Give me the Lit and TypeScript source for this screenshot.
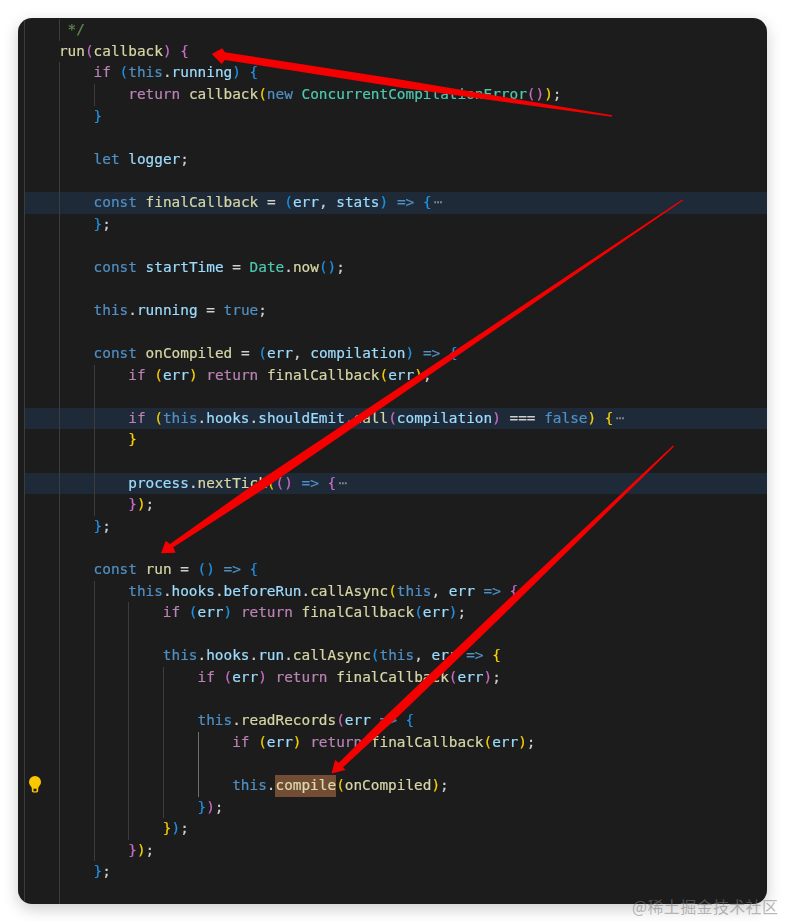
import { LitElement, html, css } from "lit";
import { customElement } from "lit/decorators.js";

interface Line {
  g: number;
  src: string;
  fold?: boolean;
  short?: boolean;
  bright?: boolean;
  bulb?: boolean;
}

const L = (g: number, src = "", extra: Partial<Line> = {}): Line => ({ g, src, ...extra });

const LINES: Line[] = [
  L(2, "[t:*/]", { short: true }),
  L(1, "[f:run][o:(][f:callback][o:)] [o:{]"),
  L(2, "[p:if] [u:(][b:this].[v:running][u:)] [u:{]"),
  L(3, "[p:return] [f:callback][y:(][b:new] [c:ConcurrentCompilationError][o:()][y:)];"),
  L(2, "[u:}]"),
  L(2),
  L(2, "[b:let] [v:logger];"),
  L(2),
  L(2, "[b:const] [f:finalCallback] = [u:(][v:err], [v:stats][u:)] [b:=>] [u:{][e:⋯]", { fold: true }),
  L(2, "[u:}];"),
  L(2),
  L(2, "[b:const] [v:startTime] = [c:Date].[f:now][u:()];"),
  L(2),
  L(2, "[b:this].[v:running] = [b:true];"),
  L(2),
  L(2, "[b:const] [f:onCompiled] = [u:(][v:err], [v:compilation][u:)] [b:=>] [u:{]"),
  L(3, "[p:if] [y:(][v:err][y:)] [p:return] [f:finalCallback][y:(][v:err][y:)];"),
  L(3),
  L(3, "[p:if] [y:(][b:this].[v:hooks].[v:shouldEmit].[f:call][o:(][v:compilation][o:)] === [b:false][y:)] [y:{][e:⋯]", { fold: true }),
  L(3, "[y:}]"),
  L(3),
  L(3, "[v:process].[f:nextTick][y:(][o:()] [b:=>] [o:{][e:⋯]", { fold: true }),
  L(3, "[o:}][y:)];"),
  L(2, "[u:}];"),
  L(2),
  L(2, "[b:const] [f:run] = [u:()] [b:=>] [u:{]"),
  L(3, "[b:this].[v:hooks].[v:beforeRun].[f:callAsync][y:(][b:this], [v:err] [b:=>] [o:{]"),
  L(4, "[p:if] [u:(][v:err][u:)] [p:return] [f:finalCallback][u:(][v:err][u:)];"),
  L(4),
  L(4, "[b:this].[v:hooks].[v:run].[f:callAsync][u:(][b:this], [v:err] [b:=>] [y:{]"),
  L(5, "[p:if] [o:(][v:err][o:)] [p:return] [f:finalCallback][o:(][v:err][o:)];"),
  L(5),
  L(5, "[b:this].[f:readRecords][o:(][v:err] [b:=>] [u:{]"),
  L(6, "[p:if] [y:(][v:err][y:)] [p:return] [f:finalCallback][y:(][v:err][y:)];", { bright: true }),
  L(6, "", { bright: true }),
  L(6, "[b:this].[h:compile][y:(][f:onCompiled][y:)];", { bright: true, bulb: true }),
  L(5, "[u:}][o:)];"),
  L(4, "[y:}][u:)];"),
  L(3, "[o:}][y:)];"),
  L(2, "[u:}];"),
  L(2),
];

const parse = (src: string) => {
  const out: unknown[] = [];
  const re = /\[(\w):([^\]]*)\]/g;
  let last = 0;
  let m: RegExpExecArray | null;
  while ((m = re.exec(src))) {
    if (m.index > last) out.push(src.slice(last, m.index));
    out.push(html`<span class="tk-${m[1]}">${m[2]}</span>`);
    last = m.index + m[0].length;
  }
  if (last < src.length) out.push(src.slice(last));
  return out;
};

@customElement("app-root")
export class AppRoot extends LitElement {
  static styles = css`
    :host {
      display: block;
      position: relative;
      box-sizing: border-box;
      height: 922px;
      padding: 18px;
      overflow: hidden;
      background: #fff;
    }
    .window {
      box-sizing: border-box;
      height: 886px;
      padding: 1.2px 0 0 6.3px;
      overflow: hidden;
      border-radius: 14px;
      background: #1c1c1c;
      box-shadow: 0 5px 16px rgba(0, 0, 0, 0.2);
      font: 14.4px/21.6px "DejaVu Sans Mono", "Liberation Mono", monospace;
      color: #d0d0d0;
    }
    .line {
      position: relative;
      display: flex;
      height: 21.6px;
      white-space: pre;
    }
    .line.fold {
      background: #1f2a38;
    }
    .guide {
      flex: none;
      box-sizing: border-box;
      width: 4ch;
      border-left: 1px solid #3c3c3c;
    }
    .guide.short {
      width: 1ch;
    }
    .guide.bright {
      border-left-color: #6e6e6e;
    }
    .code {
      flex: none;
      filter: blur(0.3px);
      -webkit-text-stroke: 0.2px currentColor;
    }
    .bulb {
      position: absolute;
      left: 4.4px;
      top: 1px;
      width: 12px;
      height: 17px;
    }
    .tk-p { color: #bb82b6; }
    .tk-b { color: #4f90c6; }
    .tk-f { color: #d6d6a6; }
    .tk-v { color: #9cdcfe; }
    .tk-c { color: #4ec9b0; }
    .tk-u { color: #1e93e6; }
    .tk-y { color: #f7d000; }
    .tk-o { color: #c86cc4; }
    .tk-t { color: #5f8a4c; }
    .tk-e {
      margin-left: 2.5px;
      color: #7f8a94;
      -webkit-text-stroke: 0;
    }
    .tk-h {
      display: inline-block;
      background: #734c35;
      color: #dcdcaa;
    }
    .arrows {
      position: absolute;
      left: 0;
      top: 0;
      width: 785px;
      height: 922px;
    }
    .arrows polygon {
      fill: #f40000;
    }
    .mark {
      position: absolute;
      left: 632px;
      top: 895px;
      font: 16px/22px "Noto Sans CJK SC", sans-serif;
      letter-spacing: 0.35px;
      color: rgba(125, 125, 125, 0.55);
      white-space: nowrap;
    }
  `;

  private renderLine(l: Line) {
    const guides = Array.from({ length: l.g }, (_, i) => {
      const last = i === l.g - 1;
      const cls = ["guide", l.short && last ? "short" : "", l.bright && last ? "bright" : ""].join(" ");
      return html`<span class=${cls}></span>`;
    });
    return html`<div class="line ${l.fold ? "fold" : ""}">
      ${guides}<span class="code">${parse(l.src)}</span>
      ${l.bulb
        ? html`<svg class="bulb" viewBox="0 0 12 17">
            <path d="M6 0a6 6 0 0 1 6 6c0 2.3-1.3 3.5-2.2 4.8-.4.6-.5 1.2-.6 1.7v2.3c0 .9-.7 1.7-1.6 1.7H4.4c-.9 0-1.6-.8-1.6-1.7v-2.3c-.1-.5-.2-1.1-.6-1.7C1.3 9.5 0 8.300 0 6a6 6 0 0 1 6-6z" fill="#fcc800"/>
            <rect x="4.500" y="12.700" width="3" height="2.600" fill="#1c1c1c"/>
          </svg>`
        : ""}
    </div>`;
  }

  render() {
    return html`
      <div class="window">${LINES.map((l) => this.renderLine(l))}</div>
      <svg class="arrows" viewBox="0 0 785 922">
        <polygon points="211.700,54 222.300,48.300 225,52.300 400,79.500 612,115.300 612,116.700 400,87.500 225,60 221.700,64" />
        <polygon points="161,553.300 165.700,540.700 170,544 255.900,483 415.100,377 682.300,199.500 683,200.500 418.700,382.400 261.100,490.800 173.300,547.300 175.700,552.700" />
        <polygon points="331.500,773.500 335,760 338.900,762.800 387.800,714 491.200,615.400 673,445.500 674,446.500 496.800,621.200 394,720.400 343.100,767.200 345.500,770" />
      </svg>
      <div class="mark">@稀土掘金技术社区</div>
    `;
  }
}
